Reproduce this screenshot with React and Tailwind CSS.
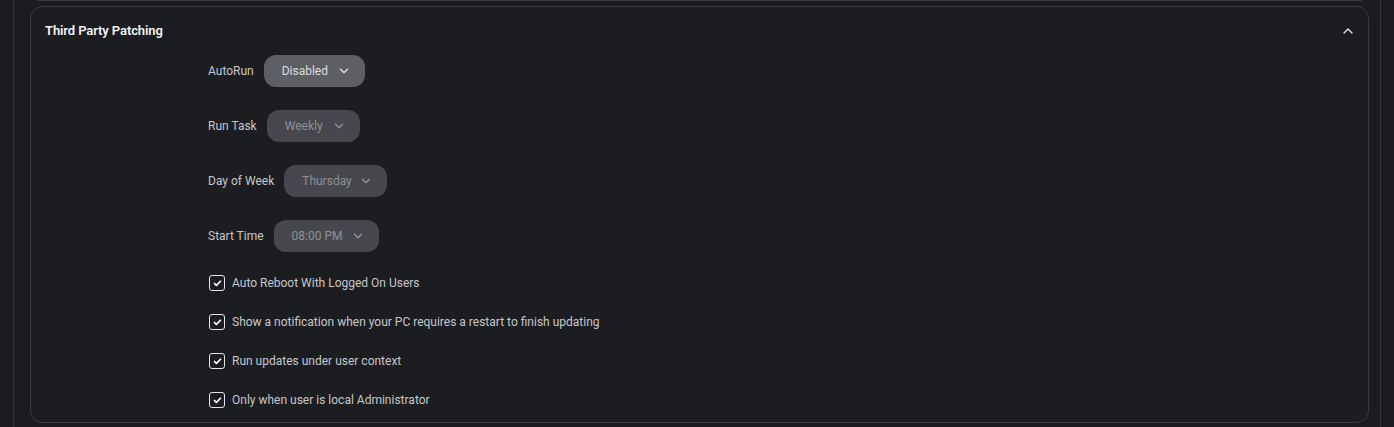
import { ChevronDown, ChevronUp, Check } from "lucide-react";

const fields = [
  { label: "AutoRun", value: "Disabled", active: true, w: "w-[101px]" },
  { label: "Run Task", value: "Weekly", w: "w-[93px]" },
  { label: "Day of Week", value: "Thursday", w: "w-[103px]" },
  { label: "Start Time", value: "08:00 PM", w: "w-[105px]" },
];

const options = [
  "Auto Reboot With Logged On Users",
  "Show a notification when your PC requires a restart to finish updating",
  "Run updates under user context",
  "Only when user is local Administrator",
];

const Select = ({ value, active, w }) => (
  <button
    type="button"
    className={`flex h-8 items-center justify-between rounded-xl pl-[18px] pr-[14px] text-[12px] ${w} ${
      active ? "bg-[#5d5f64] text-[#dcdde0]" : "bg-[#46484d] text-[#8f9196]"
    }`}
  >
    <span>{value}</span>
    <ChevronDown className="h-3.5 w-3.5" strokeWidth={2.5} />
  </button>
);

export default function App() {
  return (
    <div
      className="h-[427px] overflow-hidden bg-[#1b1c20]"
      style={{ fontFamily: "Roboto, 'Liberation Sans', sans-serif" }}
    >
      <div className="mx-[13px] h-full border-x border-[#34353a] pl-4 pr-[11px]">
        <div className="mx-[7px] h-px rounded-b-xl bg-[#3a3b40]" />
        <section className="mt-[5px] rounded-xl border border-[#3a3b40] bg-[#1c1d21] pt-4 pb-[14px]">
          <header className="flex h-4 items-center justify-between pl-[14px] pr-3">
            <h2 className="text-[13px] font-semibold tracking-[-0.1px] text-[#f1f2f4]">
              Third Party Patching
            </h2>
            <ChevronUp className="h-4 w-4 text-[#e6e7ea]" strokeWidth={2} />
          </header>
          <div className="mt-4 flex flex-col gap-[23px] pl-[177px]">
            {fields.map((f) => (
              <div key={f.label} className="flex items-center gap-[10px]">
                <span className="text-[12px] text-[#c6c7ca]">{f.label}</span>
                <Select value={f.value} active={f.active} w={f.w} />
              </div>
            ))}
            {options.map((o) => (
              <label key={o} className="ml-px flex h-4 items-center gap-[7px]">
                <span className="flex h-4 w-4 items-center justify-center rounded-[3px] border border-[#e4e5e8]">
                  <Check className="h-[9px] w-[9px] text-white" strokeWidth={4.5} />
                </span>
                <span className="text-[12px] text-[#c6c7ca]">{o}</span>
              </label>
            ))}
          </div>
        </section>
      </div>
    </div>
  );
}
